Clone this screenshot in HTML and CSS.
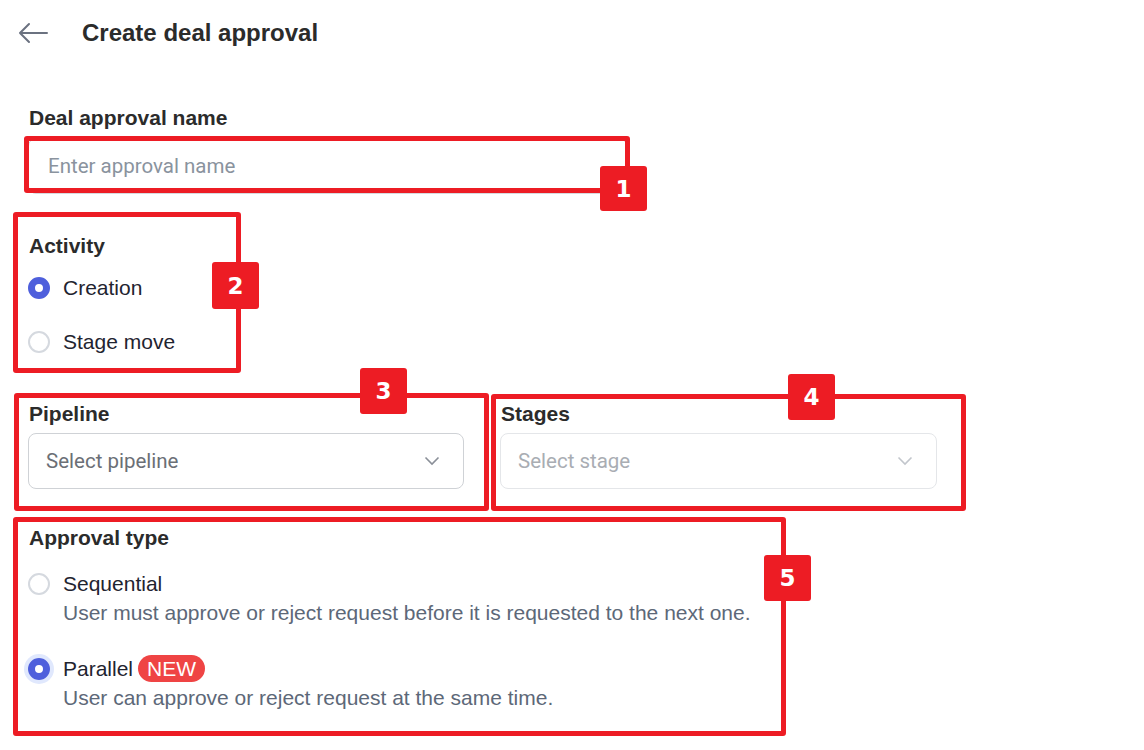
FILE: index.html
```html
<!DOCTYPE html>
<html lang="en">
<head>
    <meta charset="UTF-8">
    <title>Create deal approval</title>
    <link rel="stylesheet" href="styles.css">
</head>
<body>

<header class="top">
    <svg class="back" width="30" height="22" viewBox="0 0 30 22">
        <path d="M29 11H2M11 2L2 11l9 9" fill="none" stroke="#6b7280" stroke-width="2" stroke-linecap="round" stroke-linejoin="round"/>
    </svg>
    <h1 class="title">Create deal approval</h1>
</header>

<main class="form">

    <div class="field name-field">
        <label class="label">Deal approval name</label>
        <div class="input">Enter approval name</div>
    </div>

    <div class="field activity">
        <label class="label">Activity</label>
        <div class="radio-row first"><span class="radio on"></span>Creation</div>
        <div class="radio-row gap-lg"><span class="radio"></span>Stage move</div>
    </div>

    <div class="pair">
        <div class="field">
            <label class="label">Pipeline</label>
            <div class="select">
                <span>Select pipeline</span>
                <svg width="16" height="10" viewBox="0 0 16 10"><path d="M1.5 1.5L8 8l6.5-6.5" fill="none" stroke="#8a8f98" stroke-width="1.6"/></svg>
            </div>
        </div>
        <div class="field">
            <label class="label">Stages</label>
            <div class="select disabled">
                <span>Select stage</span>
                <svg width="16" height="10" viewBox="0 0 16 10"><path d="M1.5 1.5L8 8l6.5-6.5" fill="none" stroke="#c2c6cc" stroke-width="1.6"/></svg>
            </div>
        </div>
    </div>

    <div class="field approval">
        <label class="label">Approval type</label>
        <div class="radio-row first"><span class="radio"></span>Sequential</div>
        <div class="desc">User must approve or reject request before it is requested to the next one.</div>
        <div class="radio-row gap-lg"><span class="radio on focus"></span>Parallel<span class="new">NEW</span></div>
        <div class="desc">User can approve or reject request at the same time.</div>
    </div>

</main>

<div class="marks">
    <div class="mark m1"></div><div class="num n1">1</div>
    <div class="mark m2"></div><div class="num n2">2</div>
    <div class="mark m3"></div><div class="num n3">3</div>
    <div class="mark m4"></div><div class="num n4">4</div>
    <div class="mark m5"></div><div class="num n5">5</div>
</div>

</body>
</html>
```

FILE: styles.css
```css
body {margin: 0;
      background: #fff;
      font-family: "Liberation Sans", Arial, sans-serif;
      color: #1f2430;}

.top {height: 66px;
      display: flex;
      align-items: center;
      padding-left: 18px;}
.back {display: block;}
.title {margin: 0 0 0 34px;
        font-size: 24px;
        font-weight: bold;
        color: #2b2b2b;}

.form {padding: 0 28px;}

.field {display: flex; flex-direction: column;}
.name-field {margin-top: 40px;}

.label {font-size: 21px;
        line-height: 24px;
        font-weight: bold;
        color: #2b2b2b;
        padding-left: 1px;}

.input {margin-top: 8px;
        width: 578px;
        height: 54px;
        border: 1px solid #d6d9de;
        border-radius: 8px;
        padding-left: 19px;
        display: flex;
        align-items: center;
        font-family: Roboto, sans-serif;
        font-size: 20.5px;
        color: #8a939e;}

.activity {margin-top: 40px;}

.radio-row {display: flex;
            align-items: center;
            font-size: 21px;
            line-height: 24px;
            color: #1f2430;}
.radio-row.first {margin-top: 18px;}
.radio-row.gap-lg {margin-top: 30px;}

.radio {width: 18px;
        height: 18px;
        margin: 0 13px 0 0;
        border: 2px solid #d5d9df;
        border-radius: 50%;
        box-sizing: content-box;
        flex: none;}
.radio.on {width: 8px;
           height: 8px;
           border: 7px solid #4e5fdc;}
.radio.focus {box-shadow: 0 0 0 4px #e0e8fd;}

.pair {margin-top: 48px;
       display: grid;
       grid-template-columns: 436px 437px;
       column-gap: 36px;}

.select {margin-top: 7px;
         height: 54px;
         border: 1px solid #cfd2d6;
         border-radius: 8px;
         padding: 0 23px 0 17px;
         display: flex;
         align-items: center;
         justify-content: space-between;
         font-family: Roboto, sans-serif;
         font-size: 20.5px;
         color: #6b6f76;}
.select.disabled {border-color: #e4e6e9;
                  color: #a9adb3;}

.approval {margin-top: 37px;}
.approval .radio-row.first {margin-top: 22px;}

.desc {margin: 5px 0 0 35px;
       font-size: 21px;
       line-height: 24px;
       color: #5d6878;}
.desc:last-child {margin-top: 4px;}

.new {margin-left: 5px;
      padding: 0 9px;
      height: 27px;
      line-height: 27px;
      border-radius: 14px;
      background: #ef4444;
      color: #fff;
      font-size: 21px;}

/* annotation overlay */
.mark {position: absolute;
       border: 5px solid #ed1c24;
       border-radius: 3px;
       box-sizing: border-box;}
.num {position: absolute;
      width: 47px;
      height: 46px;
      border-radius: 3px;
      background: #ed1c24;
      color: #fff;
      font-family: "DejaVu Sans", sans-serif;
      font-weight: bold;
      font-size: 23px;
      display: flex;
      align-items: center;
      justify-content: center;}

.m1 {left: 24px; top: 136px; width: 606px; height: 57px;}
.n1 {left: 600px; top: 166px; height: 45px;}
.m2 {left: 13px; top: 212px; width: 228px; height: 161px;}
.n2 {left: 212px; top: 262px; height: 47px;}
.m3 {left: 14px; top: 393px; width: 475px; height: 118px;}
.n3 {left: 360px; top: 368px;}
.m4 {left: 491px; top: 394px; width: 475px; height: 117px;}
.n4 {left: 788px; top: 374px;}
.m5 {left: 13px; top: 517px; width: 773px; height: 219px;}
.n5 {left: 764px; top: 555px;}
```
